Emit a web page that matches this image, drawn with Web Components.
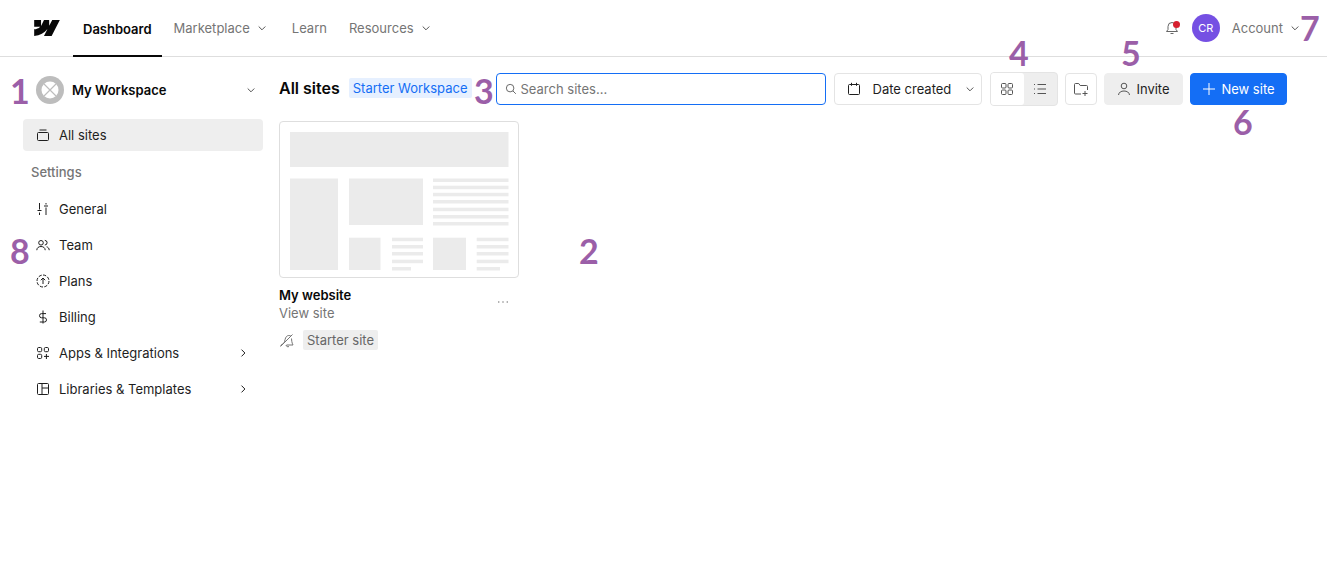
<!DOCTYPE html>
<html>
<head>
<meta charset="utf-8">
<title>Dashboard</title>
<style>
    html, body { margin: 0; height: 100%; background: #fff; }
    body { position: relative; font: 13px/16px Inter, "Liberation Sans", sans-serif; color: #1e1e1e; overflow: hidden; }
    .shell { display: flex; }
</style>
</head>
<body>
<top-bar></top-bar>
<div class="shell">
    <side-bar></side-bar>
    <main-area></main-area>
</div>
<anno-mark style="left:10px;top:71px">1</anno-mark>
<anno-mark style="left:579px;top:231px">2</anno-mark>
<anno-mark style="left:474px;top:71px">3</anno-mark>
<anno-mark style="left:1009px;top:33px">4</anno-mark>
<anno-mark style="left:1121px;top:33px">5</anno-mark>
<anno-mark style="left:1233px;top:102px">6</anno-mark>
<anno-mark style="left:1300px;top:8px">7</anno-mark>
<anno-mark style="left:10px;top:231px">8</anno-mark>

<script>
const ICONS = {
    chevron: '<path d="M4.700 6.500L8 9.800l3.300-3.300"/>',
    right: '<path d="M6.500 4.600L9.900 8l-3.400 3.400"/>',
    sites: '<rect x="2.500" y="5.500" width="11" height="8" rx="1"/><path d="M4.500 3h7"/>',
    sliders: '<path d="M4.500 2v6.500M2.500 9.500h4M4.500 11.500v2.500M11 2v1.500M9 5h4M11 6.500V14"/>',
    team: '<circle cx="6" cy="5.800" r="2.300"/><path d="M1.800 13.200c0-2.400 1.900-3.700 4.200-3.700s4.200 1.300 4.200 3.700M9.800 3.400a2.300 2.300 0 0 1 0 4.600M11.600 9.800c1.600.4 2.600 1.600 2.600 3.400"/>',
    plans: '<circle cx="8" cy="8" r="6" stroke-dasharray="3.200 1.400"/><path d="M8 11V5.200M5.800 7.200L8 5l2.200 2.200"/>',
    billing: '<path d="M8 1.500v13M11 4.600H6.600a2 2 0 0 0 0 4.200h2.800a2 2 0 0 1 0 4.200H4.800"/>',
    apps: '<rect x="2.500" y="2.500" width="4.200" height="4.200" rx="1.200"/><rect x="9.300" y="2.500" width="4.200" height="4.200" rx="1.200"/><rect x="2.500" y="9.300" width="4.200" height="4.200" rx="1.200"/><path d="M11.400 9v5M9 11.400h5"/>',
    library: '<rect x="2.500" y="2.500" width="11" height="11" rx="1"/><path d="M7 2.500v11M7 7h6.500"/>',
    search: '<circle cx="7" cy="7" r="4.300"/><path d="M10.200 10.200L13.500 13.500"/>',
    calendar: '<rect x="2.500" y="3.500" width="11" height="10" rx="1"/><path d="M5.500 1.800v3M10.500 1.800v3"/>',
    grid: '<rect x="2.500" y="2.500" width="4.500" height="4.500" rx="1"/><rect x="9" y="2.500" width="4.500" height="4.500" rx="1"/><rect x="2.500" y="9" width="4.500" height="4.500" rx="1"/><rect x="9" y="9" width="4.500" height="4.500" rx="1"/>',
    list: '<path d="M5.500 3.500h8.500M5.500 8h8.500M5.500 12.500h8.500M2 3.500h1M2 8h1M2 12.500h1"/>',
    folder: '<path d="M8 13H2.500a1 1 0 0 1-1-1V3.500a1 1 0 0 1 1-1h3.200l1.500 2h6.300a1 1 0 0 1 1 1V9"/><path d="M12 10v5M9.500 12.500h5"/>',
    user: '<circle cx="8" cy="5" r="2.800"/><path d="M2.500 14c.3-2.700 2.600-4 5.500-4s5.200 1.300 5.500 4"/>',
    plus: '<path d="M8 2v12M2 8h12"/>',
    bell: '<path d="M2.500 11.500h11l-1.500-2V6.500a4 4 0 0 0-8 0v3zM6.500 13.500h3"/>',
    dots: '<g stroke-width="1.400"><path d="M3 8h1.400M7.300 8h1.400M11.600 8h1.400"/></g>',
    unpublished: '<path d="M1.500 14.500L13.500 2.500M5 11C6 9 6 6 7.500 4.500c1.300-1.300 3.200-1.200 4.400-.4M12.500 6.500c.2 2 .2 4 1.500 6.500H7.500M1.500 13.500L5 11M10 14.500a2 2 0 0 1-3-1.500"/>'
}

// small stroke icon, name picks the drawing from ICONS
class WfIcon extends HTMLElement {
    constructor(){
        super()
        this.attachShadow({mode:'open'})
    }
    connectedCallback(){
        const size = this.getAttribute('size') || 16
        this.shadowRoot.innerHTML = `
        <style>
            :host{ display:inline-flex; flex:none; width:${size}px; height:${size}px; }
            svg{ display:block; width:100%; height:100%; fill:none; stroke:currentColor; stroke-width:1; }
        </style>
        <svg viewBox="0 0 16 16">${ICONS[this.getAttribute('name')] || ''}</svg>`
    }
}
customElements.define('wf-icon', WfIcon)

const templateBar = document.createElement('template')
templateBar.innerHTML = `
<style>
    :host{ display:flex; align-items:stretch; height:56px; border-bottom:1px solid #dedede; padding:0 7px 0 34px; color:#757575; }
    .logo{ width:26px; height:16px; align-self:center; margin-right:13px; fill:#080808; }
    nav{ display:flex; align-items:stretch; }
    a{ display:flex; align-items:center; gap:4px; color:inherit; text-decoration:none; }
    a wf-icon{ color:#555; }
    .on{ color:#080808; font-weight:600; padding:1px 10px 0; box-shadow:inset 0 -2px #080808; margin:0 12px -1px 0; }
    .m{ margin-right:22px; }
    .l{ margin-right:22px; }
    .right{ margin-left:auto; display:flex; align-items:center; }
    .bell{ position:relative; display:flex; color:#666; margin-right:12px; }
    .dot{ position:absolute; top:1px; right:0; width:7px; height:7px; border-radius:50%; background:#d6202f; }
    .avatar{ width:28px; height:28px; border-radius:50%; background:#7550e3; color:#fff; font-size:11px; display:flex; align-items:center; justify-content:center; margin-right:12px; }
    .acct{ display:flex; align-items:center; gap:4px; margin-right:17px; }
    .acct wf-icon{ color:#555; }
</style>
<svg class="logo" viewBox="0 0 1080 674"><path d="M1080 0L735.386 673.684H411.695L555.916 394.481H549.445C430.464 548.934 252.942 650.61 0 673.684V398.344C0 398.344 161.813 388.787 256.938 288.776H0V0.00439039H288.77V237.515L295.252 237.489L413.254 0.00439039H631.644V236.009L638.126 236L760.555 0H1080Z"/></svg>
<nav>
    <a class="on">Dashboard</a>
    <a class="m">Marketplace <wf-icon name="chevron"></wf-icon></a>
    <a class="l">Learn</a>
    <a>Resources <wf-icon name="chevron"></wf-icon></a>
</nav>
<div class="right">
    <span class="bell"><wf-icon name="bell"></wf-icon><span class="dot"></span></span>
    <span class="avatar">CR</span>
    <span class="acct">Account <wf-icon name="chevron"></wf-icon></span>
</div>
`
class TopBar extends HTMLElement {
    constructor(){
        super()
        this.attachShadow({mode:'open'})
        this.shadowRoot.appendChild(templateBar.content.cloneNode(true))
    }
}
customElements.define('top-bar', TopBar)

const templateItem = document.createElement('template')
templateItem.innerHTML = `
<style>
    :host{ display:flex; align-items:center; gap:8px; height:32px; margin-bottom:4px; padding:0 12px; border-radius:4px; color:#1e1e1e; }
    :host([active]){ background:#eeeeee; }
    .t{ flex:1; }
    .more{ display:none; }
    :host([more]) .more{ display:flex; }
</style>
<wf-icon class="i"></wf-icon>
<span class="t"><slot></slot></span>
<wf-icon class="more" name="right"></wf-icon>
`
class NavItem extends HTMLElement {
    constructor(){
        super()
        this.attachShadow({mode:'open'})
        const content = templateItem.content.cloneNode(true)
        // the icon reads its name when connected, so set it before appending
        content.querySelector('.i').setAttribute('name', this.getAttribute('icon'))
        this.shadowRoot.appendChild(content)
    }
}
customElements.define('nav-item', NavItem)

const templateSide = document.createElement('template')
templateSide.innerHTML = `
<style>
    :host{ display:block; flex:none; width:240px; padding:0 8px 0 23px; }
    .ws{ display:flex; align-items:center; box-sizing:border-box; height:62px; padding:4px 0 0 13px; font-weight:600; color:#080808; }
    .ws svg{ width:28px; height:28px; margin-right:8px; }
    .ws span{ flex:1; }
    .ws wf-icon{ margin-right:4px; color:#555; }
    h4{ margin:5px 0 5px; height:32px; padding:0 8px; font:500 13px/32px Inter,sans-serif; color:#757575; }
</style>
<div class="ws">
    <svg viewBox="0 0 28 28">
        <circle cx="14" cy="14" r="14" fill="#bdbdbd"/>
        <circle cx="14" cy="14" r="8.500" fill="#fff"/>
        <path d="M8 8l12 12M20 8L8 20" stroke="#bdbdbd" stroke-width="1.200"/>
    </svg>
    <span>My Workspace</span>
    <wf-icon name="chevron"></wf-icon>
</div>
<nav-item icon="sites" active>All sites</nav-item>
<h4>Settings</h4>
<nav-item icon="sliders">General</nav-item>
<nav-item icon="team">Team</nav-item>
<nav-item icon="plans">Plans</nav-item>
<nav-item icon="billing">Billing</nav-item>
<nav-item icon="apps" more>Apps &amp; Integrations</nav-item>
<nav-item icon="library" more>Libraries &amp; Templates</nav-item>
`
class SideBar extends HTMLElement {
    constructor(){
        super()
        this.attachShadow({mode:'open'})
        this.shadowRoot.appendChild(templateSide.content.cloneNode(true))
    }
}
customElements.define('side-bar', SideBar)

const templateBtn = document.createElement('template')
templateBtn.innerHTML = `
<style>
    :host{ display:flex; align-items:center; justify-content:center; gap:4px; box-sizing:border-box; height:32px; border:1px solid #e4e4e4; border-radius:4px; background:#fff; color:#1e1e1e; white-space:nowrap; }
    :host([kind=soft]){ background:#eeeeee; border-color:#eeeeee; }
    :host([kind=primary]){ background:#146ef5; border-color:#146ef5; color:#fff; }
</style>
<slot></slot>
`
class WfButton extends HTMLElement {
    constructor(){
        super()
        this.attachShadow({mode:'open'})
        this.shadowRoot.appendChild(templateBtn.content.cloneNode(true))
    }
}
customElements.define('wf-button', WfButton)

const templateCard = document.createElement('template')
templateCard.innerHTML = `
<style>
    :host{ display:block; width:240px; }
    .thumb{ display:block; box-sizing:border-box; width:240px; height:157px; border:1px solid #dedede; border-radius:4px; }
    .thumb rect{ fill:#ebebeb; }
    .head{ position:relative; margin-top:9px; }
    .name{ font-weight:600; color:#080808; }
    .view{ color:#757575; margin-top:2px; }
    .dots{ position:absolute; right:8px; top:7px; color:#999; }
    .tags{ display:flex; align-items:center; gap:8px; margin-top:9px; color:#757575; }
    .tag{ background:#eeeeee; border-radius:2px; padding:2px 4px; color:#666; }
</style>
<svg class="thumb" viewBox="280 122 238 155">
    <rect x="290" y="132" width="218.500" height="35"/>
    <rect x="290" y="178.500" width="48" height="91.500"/>
    <rect x="349" y="178.500" width="74" height="46.500"/>
    <rect x="433" y="178.500" width="75.500" height="3.500"/><rect x="433" y="185.700" width="75.500" height="3.500"/>
    <rect x="433" y="192.800" width="75.500" height="3.500"/><rect x="433" y="200" width="75.500" height="3.500"/>
    <rect x="433" y="207.700" width="75.500" height="3.500"/><rect x="433" y="215" width="75.500" height="3.500"/>
    <rect x="433" y="222" width="75.500" height="3.500"/>
    <rect x="349" y="237.700" width="31.500" height="32.300"/>
    <rect x="392" y="237.700" width="31" height="3.500"/><rect x="392" y="245" width="31" height="3.500"/>
    <rect x="392" y="252" width="31" height="3.500"/><rect x="392" y="259.700" width="31" height="3.500"/>
    <rect x="392" y="267" width="19" height="3.500"/>
    <rect x="433" y="237.700" width="33" height="32.300"/>
    <rect x="476.700" y="237.700" width="31.800" height="3.500"/><rect x="476.700" y="245" width="31.800" height="3.500"/>
    <rect x="476.700" y="252" width="31.800" height="3.500"/><rect x="476.700" y="259.700" width="31.800" height="3.500"/>
    <rect x="476.700" y="267" width="23.300" height="3.500"/>
</svg>
<div class="head">
    <div class="name">My website</div>
    <div class="view">View site</div>
    <wf-icon class="dots" name="dots"></wf-icon>
</div>
<div class="tags"><wf-icon name="unpublished"></wf-icon><span class="tag">Starter site</span></div>
`
class SiteCard extends HTMLElement {
    constructor(){
        super()
        this.attachShadow({mode:'open'})
        this.shadowRoot.appendChild(templateCard.content.cloneNode(true))
    }
}
customElements.define('site-card', SiteCard)

const templateMain = document.createElement('template')
templateMain.innerHTML = `
<style>
    :host{ display:block; flex:1; padding-left:8px; }
    .tools{ display:flex; align-items:center; height:64px; }
    h1{ margin:0 9px 0 0; font:600 16px/20px Inter,sans-serif; color:#080808; position:relative; top:-1px; white-space:nowrap; }
    .badge{ background:#e6f0ff; color:#146ef5; padding:2px 4px; border-radius:2px; margin-right:24px; position:relative; top:-1px; white-space:nowrap; }
    .search{ box-sizing:border-box; width:330px; height:32px; border:1px solid #146ef5; border-radius:4px; display:flex; align-items:center; gap:3px; padding-left:7px; color:#757575; margin-right:8px; flex:none; }
    .search wf-icon{ color:#555; }
    .date{ flex:none; width:148px; justify-content:flex-start; padding-left:11px; gap:11px; margin-right:8px; }
    .date wf-icon:last-child{ margin-left:auto; margin-right:3px; color:#555; }
    .seg{ display:flex; flex:none; box-sizing:border-box; width:68px; height:34px; background:#eeeeee; border:1px solid #e4e4e4; border-radius:4px; margin-right:7px; color:#555; }
    .seg span{ flex:1; display:flex; align-items:center; justify-content:center; }
    .seg .on{ background:#fff; border-radius:3px; flex:none; width:33px; }
    .folder{ flex:none; width:32px; margin-right:7px; color:#555; }
    .invite{ flex:none; width:79px; margin-right:7px; }
    .invite wf-icon{ color:#555; }
    .new{ flex:none; width:97px; }
</style>
<div class="tools">
    <h1>All sites</h1>
    <span class="badge">Starter Workspace</span>
    <div class="search"><wf-icon name="search" size="14"></wf-icon><span>Search sites...</span></div>
    <wf-button class="date"><wf-icon name="calendar"></wf-icon><span>Date created</span><wf-icon name="chevron"></wf-icon></wf-button>
    <div class="seg"><span class="on"><wf-icon name="grid"></wf-icon></span><span><wf-icon name="list"></wf-icon></span></div>
    <wf-button class="folder"><wf-icon name="folder"></wf-icon></wf-button>
    <wf-button class="invite" kind="soft"><wf-icon name="user"></wf-icon><span>Invite</span></wf-button>
    <wf-button class="new" kind="primary"><wf-icon name="plus"></wf-icon><span>New site</span></wf-button>
</div>
<site-card></site-card>
`
class MainArea extends HTMLElement {
    constructor(){
        super()
        this.attachShadow({mode:'open'})
        this.shadowRoot.appendChild(templateMain.content.cloneNode(true))
    }
}
customElements.define('main-area', MainArea)

// purple numbered callouts laid over the screenshot
const templateMark = document.createElement('template')
templateMark.innerHTML = `
<style>
    :host{ position:absolute; font:700 34px/40px Lato,sans-serif; color:#9b5fa8; }
</style>
<slot></slot>
`
class AnnoMark extends HTMLElement {
    constructor(){
        super()
        this.attachShadow({mode:'open'})
        this.shadowRoot.appendChild(templateMark.content.cloneNode(true))
    }
}
customElements.define('anno-mark', AnnoMark)
</script>
</body>
</html>
